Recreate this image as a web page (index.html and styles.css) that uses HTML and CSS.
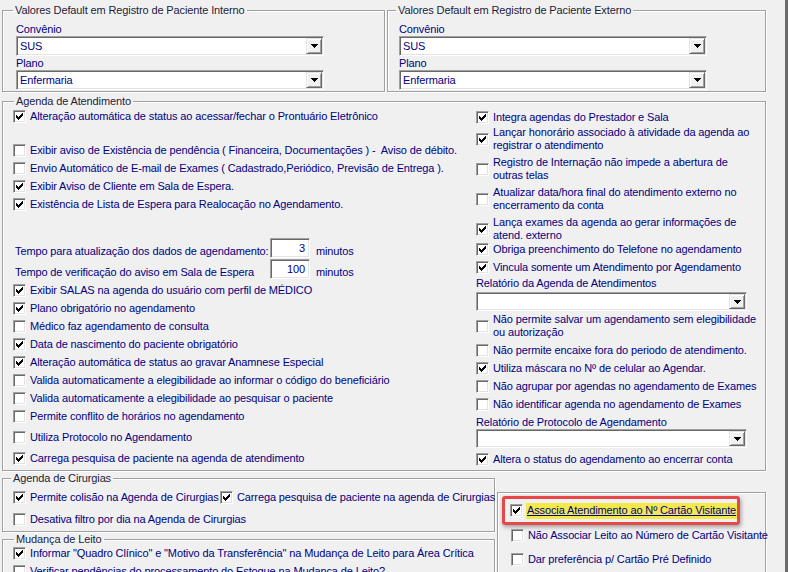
FILE: index.html
```html
<!DOCTYPE html>
<html lang="pt-BR">

<head>
  <meta charset="UTF-8">
  <title>Parâmetros de Agendamento</title>
  <link rel="stylesheet" href="styles.css">
</head>

<body>
  <svg class="defs" width="0" height="0">
    <symbol id="tick" viewBox="0 0 7 7">
      <path d="M6 0h1v1h-1z M5 1h2v1h-2z M0 2h1v1h-1z M4 2h3v1h-3z M0 3h2v1h-2z M3 3h3v1h-3z M0 4h5v1h-5z M1 5h3v1h-3z M2 6h1v1h-1z" />
    </symbol>
    <symbol id="arrow" viewBox="0 0 7 4">
      <path d="M0 0h7v1h-7z M1 1h5v1h-5z M2 2h3v1h-3z M3 3h1v1h-1z" />
    </symbol>
  </svg>

  <div class="window">
    <!-- valores default -->
    <div class="top">
      <fieldset class="grp grp-int">
        <legend>Valores Default em Registro de Paciente Interno</legend>
        <div class="lbl">Convênio</div>
        <div class="combo"><span>SUS</span><i class="drop"><svg><use href="#arrow" /></svg></i></div>
        <div class="lbl">Plano</div>
        <div class="combo"><span>Enfermaria</span><i class="drop"><svg><use href="#arrow" /></svg></i></div>
      </fieldset>

      <fieldset class="grp grp-ext">
        <legend>Valores Default em Registro de Paciente Externo</legend>
        <div class="lbl">Convênio</div>
        <div class="combo"><span>SUS</span><i class="drop"><svg><use href="#arrow" /></svg></i></div>
        <div class="lbl">Plano</div>
        <div class="combo"><span>Enfermaria</span><i class="drop"><svg><use href="#arrow" /></svg></i></div>
      </fieldset>
    </div>

    <!-- agenda de atendimento -->
    <fieldset class="grp agenda">
      <legend>Agenda de Atendimento</legend>
      <div class="cols">
        <div class="col col-left">
          <div class="chk"><span class="cb"><svg><use href="#tick" /></svg></span><span>Alteração automática de status ao acessar/fechar o Prontuário Eletrônico</span></div>
          <div class="blank"></div>
          <div class="chk"><span class="cb"></span><span>Exibir aviso de Existência de pendência ( Financeira, Documentações ) -&nbsp; Aviso de débito.</span></div>
          <div class="chk"><span class="cb"></span><span>Envio Automático de E-mail de Exames ( Cadastrado,Periódico, Previsão de Entrega ).</span></div>
          <div class="chk"><span class="cb"><svg><use href="#tick" /></svg></span><span>Exibir Aviso de Cliente em Sala de Espera.</span></div>
          <div class="chk"><span class="cb"><svg><use href="#tick" /></svg></span><span>Existência de Lista de Espera para Realocação no Agendamento.</span></div>
          <div class="blank tall"></div>
          <div class="tempos">
            <div class="tempo">
              <span class="t-lbl">Tempo para atualização dos dados de agendamento:</span>
              <span class="num">3</span>
              <span class="unit">minutos</span>
            </div>
            <div class="tempo">
              <span class="t-lbl">Tempo de verificação do aviso em Sala de Espera</span>
              <span class="num">100</span>
              <span class="unit">minutos</span>
            </div>
          </div>
          <div class="chk"><span class="cb"><svg><use href="#tick" /></svg></span><span>Exibir SALAS na agenda do usuário com perfil de MÉDICO</span></div>
          <div class="chk"><span class="cb"><svg><use href="#tick" /></svg></span><span>Plano obrigatório no agendamento</span></div>
          <div class="chk"><span class="cb"></span><span>Médico faz agendamento de consulta</span></div>
          <div class="chk"><span class="cb"><svg><use href="#tick" /></svg></span><span>Data de nascimento do paciente obrigatório</span></div>
          <div class="chk"><span class="cb"><svg><use href="#tick" /></svg></span><span>Alteração automática de status ao gravar Anamnese Especial</span></div>
          <div class="chk"><span class="cb"></span><span>Valida automaticamente a elegibilidade ao informar o código do beneficiário</span></div>
          <div class="chk"><span class="cb"></span><span>Valida automaticamente a elegibilidade ao pesquisar o paciente</span></div>
          <div class="chk"><span class="cb"></span><span>Permite conflito de horários no agendamento</span></div>
          <div class="chk gap7"><span class="cb"></span><span>Utiliza Protocolo no Agendamento</span></div>
          <div class="chk gap7"><span class="cb"><svg><use href="#tick" /></svg></span><span>Carrega pesquisa de paciente na agenda de atendimento</span></div>
        </div>

        <div class="col col-right">
          <div class="chk"><span class="cb"><svg><use href="#tick" /></svg></span><span>Integra agendas do Prestador e Sala</span></div>
          <div class="chk gap2"><span class="cb"><svg><use href="#tick" /></svg></span><span>Lançar honorário associado à atividade da agenda ao<br>registrar o atendimento</span></div>
          <div class="chk"><span class="cb"></span><span>Registro de Internação não impede a abertura de<br>outras telas</span></div>
          <div class="chk"><span class="cb"></span><span>Atualizar data/hora final do atendimento externo no<br>encerramento da conta</span></div>
          <div class="chk"><span class="cb"><svg><use href="#tick" /></svg></span><span>Lança exames da agenda ao gerar informações de<br>atend. externo</span></div>
          <div class="chk gap0"><span class="cb"><svg><use href="#tick" /></svg></span><span>Obriga preenchimento do Telefone no agendamento</span></div>
          <div class="chk"><span class="cb"><svg><use href="#tick" /></svg></span><span>Vincula somente um Atendimento por Agendamento</span></div>
          <div class="cap gap2">Relatório da Agenda de Atendimentos</div>
          <div class="combo wide gap2"><span></span><i class="drop"><svg><use href="#arrow" /></svg></i></div>
          <div class="chk gap2"><span class="cb"></span><span>Não permite salvar um agendamento sem elegibilidade<br>ou autorização</span></div>
          <div class="chk"><span class="cb"></span><span>Não permite encaixe fora do periodo de atendimento.</span></div>
          <div class="chk"><span class="cb"><svg><use href="#tick" /></svg></span><span>Utiliza máscara no Nº de celular ao Agendar.</span></div>
          <div class="chk"><span class="cb"></span><span>Não agrupar por agendas no agendamento de Exames</span></div>
          <div class="chk"><span class="cb"></span><span>Não identificar agenda no agendamento de Exames</span></div>
          <div class="cap">Relatório de Protocolo de Agendamento</div>
          <div class="combo wide gap0"><span></span><i class="drop"><svg><use href="#arrow" /></svg></i></div>
          <div class="chk"><span class="cb"><svg><use href="#tick" /></svg></span><span>Altera o status do agendamento ao encerrar conta</span></div>
        </div>
      </div>
    </fieldset>

    <!-- cirurgias / leito / cartão -->
    <div class="bottom">
      <div class="stack">
        <fieldset class="grp cir">
          <legend>Agenda de Cirurgias</legend>
          <div class="pair">
            <div class="chk first"><span class="cb"><svg><use href="#tick" /></svg></span><span>Permite colisão na Agenda de Cirurgias</span></div>
            <div class="chk"><span class="cb"><svg><use href="#tick" /></svg></span><span>Carrega pesquisa de paciente na agenda de Cirurgias</span></div>
          </div>
          <div class="chk filtro"><span class="cb"></span><span>Desativa filtro por dia na Agenda de Cirurgias</span></div>
        </fieldset>

        <fieldset class="grp leito">
          <legend>Mudança de Leito</legend>
          <div class="chk"><span class="cb"><svg><use href="#tick" /></svg></span><span>Informar "Quadro Clínico" e "Motivo da Transferência" na Mudança de Leito para Área Crítica</span></div>
          <div class="chk"><span class="cb"></span><span>Verificar pendências do processamento do Estoque na Mudança de Leito?</span></div>
        </fieldset>
      </div>

      <div class="vbox">
        <div class="mark">
          <span class="cb"><svg><use href="#tick" /></svg></span><span class="hl">Associa Atendimento ao Nº Cartão Visitante</span>
        </div>
        <div class="chk"><span class="cb"></span><span>Não Associar Leito ao Número de Cartão Visitante</span></div>
        <div class="chk"><span class="cb"></span><span>Dar preferência p/ Cartão Pré Definido</span></div>
      </div>
    </div>
  </div>
</body>

</html>
```

FILE: styles.css
```css
/* base */
* {
  box-sizing: border-box;
}

body {
  margin: 0;
  background: #f0f0f0;
  font: 11px/13px "Liberation Sans", Arial, sans-serif;
  letter-spacing: -0.12px;
  color: #000080;
}

.defs {
  position: absolute;
  width: 0;
  height: 0;
}

/* janela */
.window {
  width: 788px;
  height: 572px;
  overflow: hidden;
  padding: 4px 0 0 2px;
  border-right: 3px solid #6b6b6b;
}

/* group box */
.grp {
  margin: 0;
  min-width: 0;
  border: 1px solid #a0a0a0;
  box-shadow: inset 1px 1px 0 #fff, 1px 1px 0 #fff;
}

.grp legend {
  padding: 0 2px;
  line-height: 13px;
  color: #20203c;
}

/* topo */
.top {
  display: grid;
  grid-template-columns: 383px 379px;
  column-gap: 2px;
}

.grp-int {
  padding: 5px 0 1px 13px;
}

.grp-int legend,
.grp-ext legend {
  margin-left: -3px;
}

.grp-ext {
  padding: 5px 0 1px 11px;
}

.lbl {
  height: 14px;
  line-height: 14px;
}

/* combobox */
.combo {
  display: flex;
  align-items: center;
  justify-content: space-between;
  width: 308px;
  height: 20px;
  padding: 0 1px 0 3px;
  background: #fff;
  border: 1px solid;
  border-color: #a0a0a0 #fff #fff #a0a0a0;
  box-shadow: inset 1px 1px 0 #696969, inset -1px -1px 0 #e3e3e3;
}

.combo.wide {
  width: 271px;
  height: 19px;
}

.drop {
  display: flex;
  align-items: center;
  justify-content: center;
  width: 16px;
  height: 16px;
  background: #f0f0f0;
  border: 1px solid;
  border-color: #e3e3e3 #696969 #696969 #e3e3e3;
  box-shadow: inset 1px 1px 0 #fff, inset -1px -1px 0 #a0a0a0;
}

.combo.wide .drop {
  height: 15px;
}

.drop svg {
  width: 7px;
  height: 4px;
  fill: #000;
  shape-rendering: crispEdges;
}

/* agenda de atendimento */
.agenda {
  width: 764px;
  margin-top: 3px;
  padding: 1px 0 4px 10px;
}

.agenda legend {
  margin-left: 1px;
}

.cols {
  display: grid;
  grid-template-columns: 463px 1fr;
}

.col {
  display: flex;
  flex-direction: column;
}

.col > * + * {
  margin-top: 4px;
}

.col > .gap0 {
  margin-top: 0;
}

.col > .gap2 {
  margin-top: 2px;
}

.col > .gap7 {
  margin-top: 7px;
}

.col-right {
  padding-top: 1px;
}

.blank {
  height: 12px;
}

.blank.tall {
  height: 19px;
}

/* checkbox */
.chk {
  display: flex;
  align-items: center;
  gap: 4px;
  min-height: 14px;
  white-space: nowrap;
}

.cb {
  display: flex;
  align-items: center;
  justify-content: center;
  flex: none;
  width: 13px;
  height: 13px;
  background: #fff;
  border: 1px solid;
  border-color: #a0a0a0 #fff #fff #a0a0a0;
  box-shadow: inset 1px 1px 0 #696969, inset -1px -1px 0 #e3e3e3;
}

.cb svg {
  width: 7px;
  height: 7px;
  fill: #000;
  shape-rendering: crispEdges;
}

.cap {
  line-height: 14px;
}

/* tempos */
.tempos {
  display: flex;
  flex-direction: column;
  gap: 1px;
}

.tempo {
  display: flex;
  align-items: flex-end;
  height: 20px;
}

.t-lbl {
  flex: none;
  width: 257px;
  padding-left: 2px;
  line-height: 14px;
  white-space: nowrap;
}

.num {
  width: 40px;
  height: 20px;
  padding-right: 4px;
  line-height: 18px;
  text-align: right;
  background: #fff;
  border: 1px solid;
  border-color: #a0a0a0 #fff #fff #a0a0a0;
  box-shadow: inset 1px 1px 0 #696969, inset -1px -1px 0 #e3e3e3;
}

.unit {
  margin-left: 6px;
  line-height: 14px;
}

/* parte de baixo */
.bottom {
  display: grid;
  grid-template-columns: 493px 269px;
  column-gap: 2px;
  align-items: start;
}

.cir {
  margin-top: 1px;
  padding: 5px 0 5px 10px;
}

.cir legend {
  margin-left: -2px;
}

.pair {
  display: flex;
}

.pair .first {
  flex: none;
  width: 207px;
}

.filtro {
  margin-top: 8px;
}

.leito {
  margin-top: 1px;
  height: 60px;
  padding: 0 0 0 10px;
}

.leito legend {
  margin-left: 1px;
}

.leito .chk + .chk {
  margin-top: 4px;
}

/* cartão visitante */
.vbox {
  height: 100px;
  margin-top: 21px;
  padding: 3px 0 0 4px;
  border: 1px solid #a0a0a0;
  box-shadow: inset 1px 1px 0 #fff, 1px 1px 0 #fff;
}

.mark {
  display: flex;
  align-items: center;
  gap: 3px;
  width: 238px;
  height: 29px;
  padding-left: 5px;
  border: 3px solid #e8474a;
  border-radius: 3px;
  box-shadow: 1px 2px 4px rgba(0, 0, 0, .35);
}

.hl {
  padding: 1px 1px 2px;
  background: #f3e84c;
  text-decoration: underline;
  white-space: nowrap;
}

.vbox .chk {
  height: 17px;
  margin-top: 2px;
  padding-left: 9px;
}

.vbox .chk + .chk {
  margin-top: 7px;
}
```
